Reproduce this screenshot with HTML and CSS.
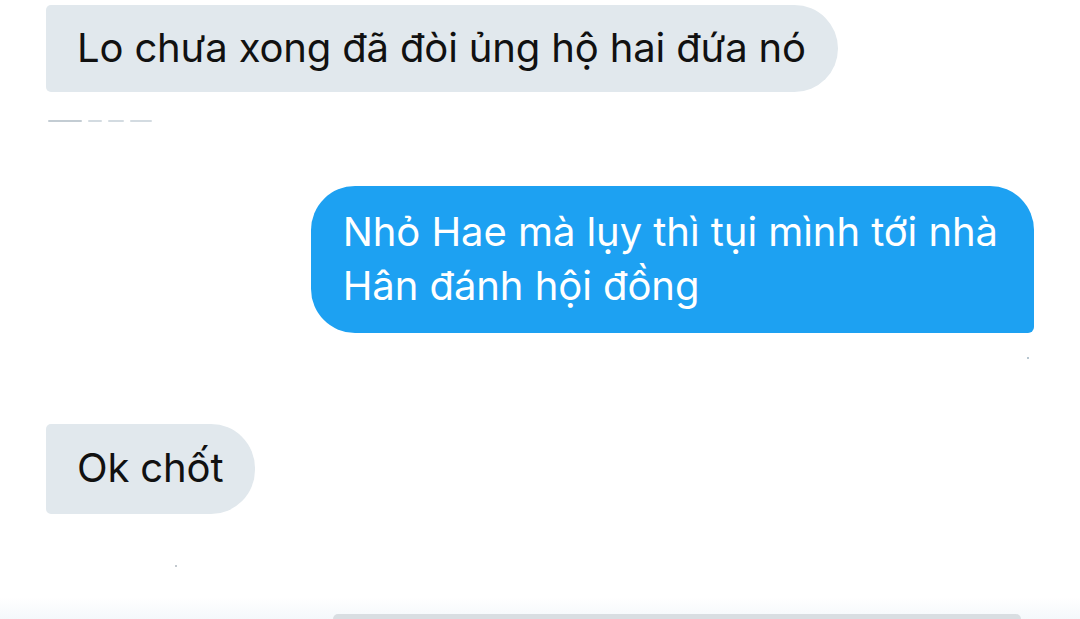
FILE: index.html
```html
<!DOCTYPE html>
<html lang="vi">
<head>
<meta charset="utf-8">
<link rel="stylesheet" href="styles.css">
</head>
<body>
<div class="chat">
  <div class="msg in first">Lo chưa xong đã đòi ủng hộ hai đứa nó</div>
  <div class="stamp"><i class="s1"></i><i class="s2"></i><i class="s3"></i><i class="s4"></i></div>
  <div class="msg out">Nhỏ Hae mà lụy thì tụi mình tới nhà<br>Hân đánh hội đồng</div>
  <div class="dot-row"><span class="dot"></span></div>
  <div class="msg in last">Ok chốt</div>
  <div class="mark"></div>
  <div class="composer"><div class="input"></div></div>
</div>
</body>
</html>
```

FILE: styles.css
```css
html, body {
  margin: 0;
  padding: 0;
  background: #ffffff;
}
.chat {
  height: 619px;
  overflow: hidden;
  display: flex;
  flex-direction: column;
  font-family: "Inter", "Noto Sans", sans-serif;
}
.msg {
  font-size: 40px;
  line-height: 54px;
  letter-spacing: -0.15px;
}
.in {
  align-self: flex-start;
  margin-left: 46px;
  background: #e1e8ed;
  color: #111;
  padding: 16px 32px 17px 31px;
  border-radius: 5px 44px 44px 5px;
}
.first { margin-top: 5px; }
.stamp {
  margin: 28px 0 0 48px;
  height: 3px;
  display: flex;
  gap: 6px;
}
.stamp i {
  display: block;
  height: 2px;
  background: #d3dbe1;
  border-radius: 1px;
}
.stamp .s1 { width: 34px; background: #c3ccd3; }
.stamp .s2 { width: 14px; }
.stamp .s3 { width: 16px; }
.stamp .s4 { width: 22px; }
.out {
  align-self: flex-end;
  margin: 63px 46px 0 0;
  background: #1da1f2;
  color: #fff;
  padding: 19px 36px 20px 32px;
  border-radius: 44px 44px 6px 44px;
  letter-spacing: -0.06px;
}
.dot-row {
  display: flex;
  justify-content: flex-end;
  margin: 24px 51px 0 0;
}
.dot {
  width: 2px;
  height: 2px;
  background: #9fb3c0;
  border-radius: 50%;
}
.last {
  margin-top: 65px;
  padding-top: 17px;
  padding-bottom: 19px;
}
.mark {
  margin: 51px 0 0 175px;
  width: 2px;
  height: 2px;
  background: #c2c9cf;
}
.composer {
  margin-top: auto;
  height: 22px;
  background: linear-gradient(#ffffff, #f4f8fb);
  display: flex;
  align-items: flex-end;
}
.input {
  width: 688px;
  margin-left: 333px;
  height: 5px;
  background: #d9dee2;
  border-radius: 6px 6px 0 0;
}
```
